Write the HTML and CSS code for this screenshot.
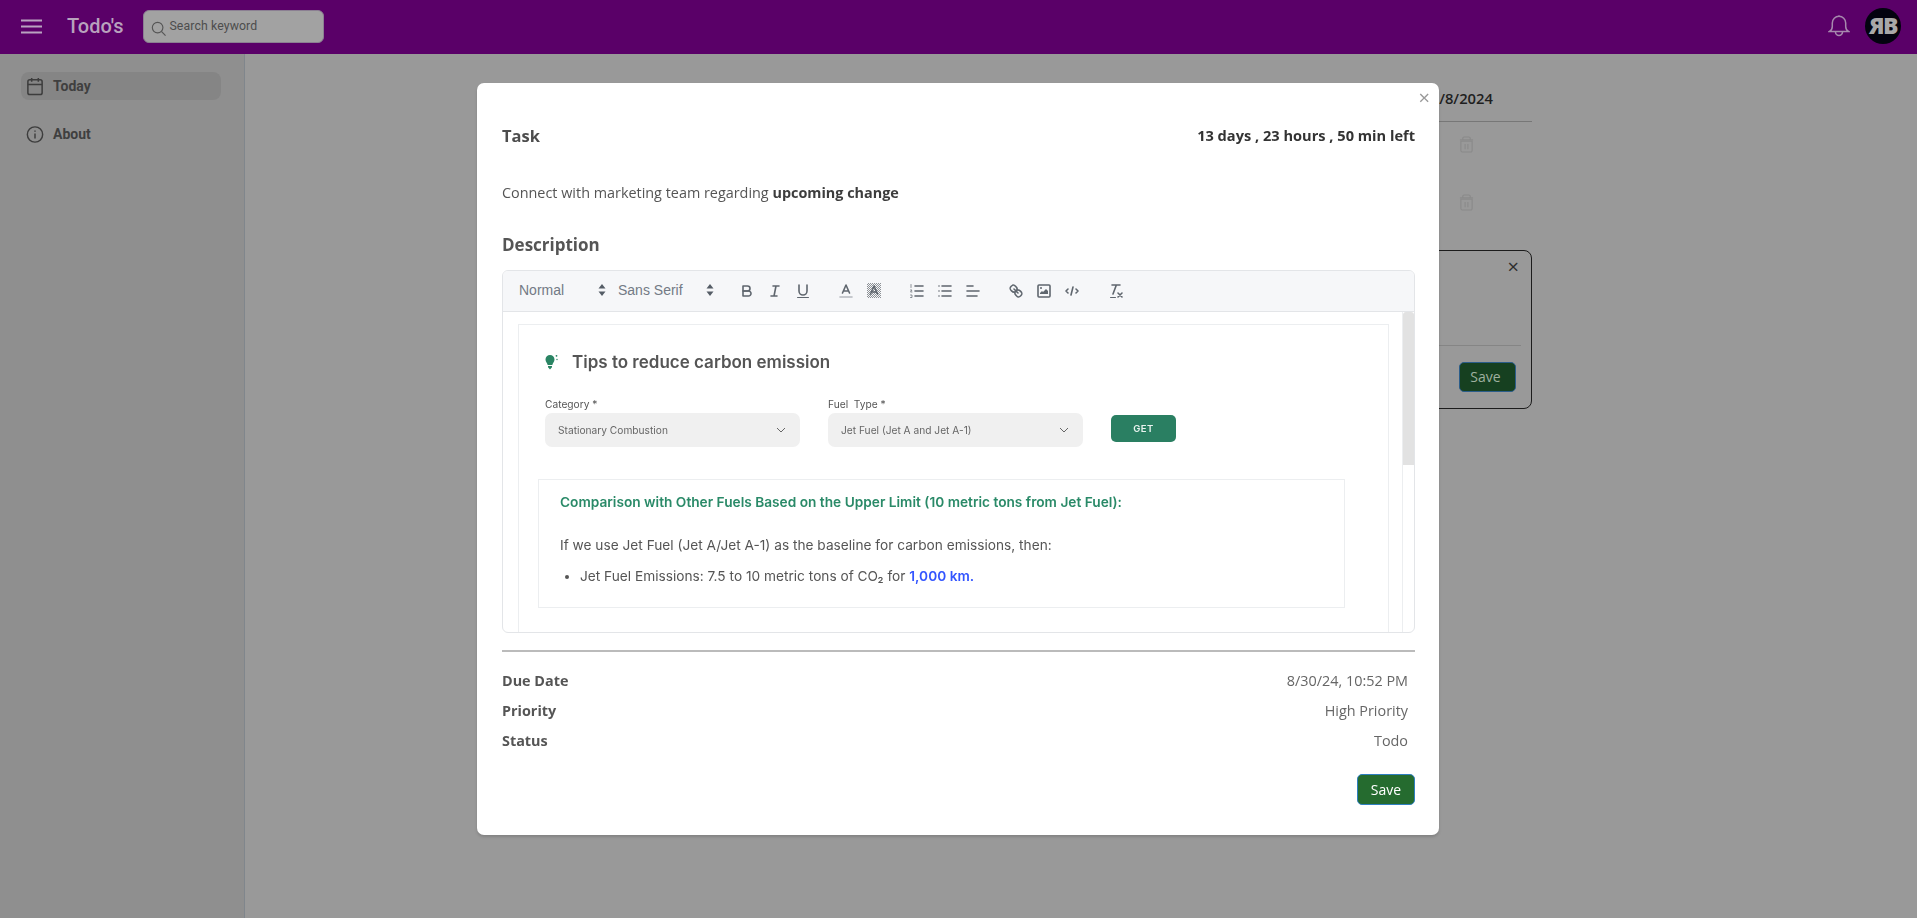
FILE: index.html
```html
<!DOCTYPE html>
<html lang="en">
<head>
<meta charset="utf-8">
<title>Todo's</title>
<link rel="stylesheet" href="styles.css">
</head>
<body>
<div class="app">
  <header class="topbar">
    <svg class="menu-icon" viewBox="0 0 21 15"><path d="M0 1.500h21M0 7.500h21M0 13.500h21"/></svg>
    <div class="brand">Todo's</div>
    <div class="search">
      <svg class="search-icon" viewBox="0 0 17 17"><circle cx="7.500" cy="7.500" r="6"/><path d="M12 12l4.500 4.500"/></svg>
      <span>Search keyword</span>
    </div>
    <div class="topbar-right">
      <svg class="bell" viewBox="0 0 22 22"><path d="M1.500 16.500c1.800-1 2.800-2.500 2.800-5V8a6.700 6.700 0 0 1 13.400 0v3.500c0 2.500 1 4 2.800 5z"/><path d="M7.500 17a3.500 3.500 0 0 0 7 0M11 1.300V.5"/></svg>
      <div class="avatar">ЯB</div>
    </div>
  </header>
  <div class="body">
    <aside class="sidebar">
      <div class="nav-item active">
        <svg class="nav-icon" viewBox="0 0 18 20"><rect x="1.500" y="3" width="15" height="15.500" rx="2"/><path d="M1.500 8h15M5.500 1v4M12.500 1v4"/></svg>
        <span>Today</span>
      </div>
      <div class="nav-item">
        <svg class="nav-icon" viewBox="0 0 20 20"><circle cx="10" cy="10" r="8.500"/><path d="M10 9v5.500M10 5.500v1.500"/></svg>
        <span>About</span>
      </div>
    </aside>
    <main class="main">
      <section class="board">
        <div class="date-head">/8/2024</div>
        <div class="task-row">
          <svg class="trash" viewBox="0 0 16 18"><path d="M2 5.500h12V15.500a1.500 1.500 0 0 1-1.500 1.500h-9A1.500 1.500 0 0 1 2 15.500zM1 4h14M4 4V2.500A1.500 1.500 0 0 1 5.500 1h5A1.500 1.500 0 0 1 12 2.500V4M6.500 8.500v5.500M9.500 8.500v5.500"/></svg>
        </div>
        <div class="task-row">
          <svg class="trash" viewBox="0 0 16 18"><path d="M2 5.500h12V15.500a1.500 1.500 0 0 1-1.500 1.500h-9A1.500 1.500 0 0 1 2 15.500zM1 4h14M4 4V2.500A1.500 1.500 0 0 1 5.500 1h5A1.500 1.500 0 0 1 12 2.500V4M6.500 8.500v5.500M9.500 8.500v5.500"/></svg>
        </div>
        <div class="add-card">
          <div class="add-card-top"><span class="card-close">×</span></div>
          <div class="add-card-foot"><button class="btn-dim">Save</button></div>
        </div>
      </section>
    </main>
  </div>
</div>

<div class="modal">
  <span class="modal-close">×</span>
  <div class="modal-head">
    <h2 class="task-title">Task</h2>
    <div class="time-left">13 days , 23 hours , 50 min left</div>
  </div>
  <p class="task-text">Connect with marketing team regarding <strong>upcoming change</strong></p>
  <h2 class="desc-title">Description</h2>

  <div class="editor">
    <div class="toolbar">
      <div class="picker p-normal">Normal<svg class="updown" viewBox="0 0 8 12"><path d="M4 0l3.500 4.500h-7zM4 12L.5 7.500h7z"/></svg></div>
      <div class="picker p-font">Sans Serif<svg class="updown" viewBox="0 0 8 12"><path d="M4 0l3.500 4.500h-7zM4 12L.5 7.500h7z"/></svg></div>

      <div class="tool-group">
        <svg class="ql" viewBox="0 0 18 18"><path d="M5,4H9.500A2.500,2.500,0,0,1,12,6.500v0A2.500,2.500,0,0,1,9.500,9H5V4Z"/><path d="M5,9h5.500A2.500,2.500,0,0,1,13,11.500v0A2.500,2.500,0,0,1,10.500,14H5V9Z"/></svg>
        <svg class="ql" viewBox="0 0 18 18"><path d="M7 4h6M5 14h6M8 14l2-10"/></svg>
        <svg class="ql" viewBox="0 0 18 18"><path d="M5,3V9a4,4,0,0,0,4,4h0a4,4,0,0,0,4-4V3"/><rect class="fill" x="3" y="15" width="12" height="1" rx=".5"/></svg>
      </div>
      <div class="tool-group">
        <svg class="ql" viewBox="0 0 18 18"><path class="light" d="M3 15h12"/><path d="M5.500 11L9 3l3.500 8M11.630 9H6.380"/></svg>
        <svg class="ql" viewBox="0 0 18 18"><defs><pattern id="hatch" width="2" height="2" patternUnits="userSpaceOnUse"><rect class="hatch-a" width="1" height="1"/><rect class="hatch-a" x="1" y="1" width="1" height="1"/></pattern></defs><rect class="dots" x="2" y="1" width="14" height="15" fill="url(#hatch)"/><path d="M5.500 12L9 4l3.500 8M11.630 10H6.380"/></svg>
      </div>
      <div class="tool-group">
        <svg class="ql" viewBox="0 0 18 18"><path d="M7 4h8M7 9h8M7 14h8"/><path class="thin" d="M3 2.500v3M2.500 8h1.500l-1.500 2h1.500M2.500 13h1.500v2.500h-1.500"/></svg>
        <svg class="ql" viewBox="0 0 18 18"><path d="M6 4h9M6 9h9M6 14h9M3 4h.01M3 9h.01M3 14h.01"/></svg>
        <svg class="ql" viewBox="0 0 18 18"><path d="M3 9h12M3 14h10M3 4h6"/></svg>
      </div>
      <div class="tool-group">
        <svg class="ql" viewBox="0 0 18 18"><path d="M7 7l4 4M8.900,4.577a3.476,3.476,0,0,1,.36,4.679A3.476,3.476,0,0,1,4.577,8.900C3.185,7.500,2.035,6.400,4.217,4.217S7.500,3.185,8.900,4.577ZM13.423,9.100a3.476,3.476,0,0,0-4.679-.36,3.476,3.476,0,0,0,.36,4.679c1.392,1.392,2.500,2.542,4.679.36S14.815,10.500,13.423,9.100Z"/></svg>
        <svg class="ql" viewBox="0 0 18 18"><rect x="3" y="3" width="12" height="12" rx="1"/><circle class="fill" cx="6" cy="6" r="1"/><polygon class="fill" points="5 12 5 11 7 9 8 10 11 7 13 9 13 12"/></svg>
        <svg class="ql" viewBox="0 0 18 18"><path d="M5 7L3 9l2 2M13 7l2 2-2 2M10 5L8 13"/></svg>
      </div>
      <div class="tool-group last">
        <svg class="ql" viewBox="0 0 18 18"><path d="M5 3h8M6 12l3.350-9M11 11l4 4M15 11l-4 4"/><rect class="fill" x="3" y="15" width="6" height="1" rx=".5"/></svg>
      </div>
    </div>

    <div class="editor-body">
      <div class="editor-content">
        <div class="tip-card">
          <div class="tip-title">
            <svg class="bulb" viewBox="0 0 13 16"><path class="bulb-fill" d="M5 1a4.500 4.500 0 0 1 4.500 4.500c0 2.300-1.600 3.200-2.200 5.500H2.700C2.100 8.700.5 7.800.5 5.500A4.500 4.500 0 0 1 5 1zM3 12h4v1.300L5 15.500l-2-2.200z"/><circle class="bulb-fill" cx="11.500" cy="1.800" r=".9"/><circle class="bulb-fill" cx="12" cy="5.500" r=".7"/></svg>
            <span>Tips to reduce carbon emission</span>
          </div>
          <div class="form-row">
            <div class="field">
              <label>Category *</label>
              <div class="select"><span>Stationary Combustion</span><svg class="chev" viewBox="0 0 10 6"><path d="M1 1l4 4 4-4"/></svg></div>
            </div>
            <div class="field">
              <label>Fuel&nbsp; Type *</label>
              <div class="select"><span>Jet Fuel (Jet A and Jet A-1)</span><svg class="chev" viewBox="0 0 10 6"><path d="M1 1l4 4 4-4"/></svg></div>
            </div>
            <button class="btn-get">GET</button>
          </div>
          <div class="result">
            <h3>Comparison with Other Fuels Based on the Upper Limit (10 metric tons from Jet Fuel):</h3>
            <p>If we use Jet Fuel (Jet A/Jet A-1) as the baseline for carbon emissions, then:</p>
            <ul>
              <li>Jet Fuel Emissions: 7.5 to 10 metric tons of CO₂ for <b>1,000 km.</b></li>
            </ul>
          </div>
        </div>
      </div>
      <div class="scrolltrack"><div class="scrollthumb"></div></div>
    </div>
  </div>

  <hr class="rule">
  <dl class="facts">
    <div class="fact"><dt>Due Date</dt><dd>8/30/24, 10:52 PM</dd></div>
    <div class="fact"><dt>Priority</dt><dd>High Priority</dd></div>
    <div class="fact"><dt>Status</dt><dd>Todo</dd></div>
  </dl>
  <div class="modal-foot"><button class="btn-save">Save</button></div>
</div>
</body>
</html>
```
FILE: styles.css
```css
* { box-sizing: border-box; }
html, body { margin: 0; height: 100%; overflow: hidden; }
body { font-family: "Open Sans", sans-serif; background: #999; color: #333; }
.app { height: 918px; display: flex; flex-direction: column; }

.topbar { height: 54px; flex: none; background: #5a0068; display: flex; align-items: center; padding: 0 16px 2px 21px; }
.menu-icon { width: 21px; height: 15px; flex: none; fill: none; stroke: #b9a3c0; stroke-width: 2; }
.brand { margin-left: 25px; font: 500 20px/1 Roboto, sans-serif; color: #b8a2bd; }
.search { margin-left: 20px; width: 181px; height: 33px; background: #a2a2a2; border: 1px solid #8b7f92; border-radius: 6px; display: flex; align-items: center; padding: 1px 0 0 7px; font: 400 12.300px/1 Roboto, sans-serif; color: #4d4d4d; }
.search span { margin-left: 3px; letter-spacing: .1px; }
.search-icon { width: 15px; height: 15px; margin-top: 3px; fill: none; stroke: #555; stroke-width: 1.300; }
.topbar-right { margin-left: auto; display: flex; align-items: center; gap: 15px; }
.bell { width: 22px; height: 22px; fill: none; stroke: #a688ad; stroke-width: 1.500; }
.avatar { width: 36px; height: 36px; border-radius: 50%; background: #03030f; color: #a8a8a8; font: 800 23px/35px "Open Sans", sans-serif; text-align: center; letter-spacing: -1.500px; }

.body { flex: 1; display: flex; min-height: 0; }
.sidebar { width: 245px; flex: none; background: #8f8f8f; border-right: 1px solid #80868c; padding: 18px 23px 0 21px; }
.nav-item { height: 28px; margin-bottom: 20px; border-radius: 8px; display: flex; align-items: center; padding-left: 5px; gap: 9px; font: 700 14px/1 Roboto, sans-serif; color: #3f3f3f; }
.nav-item.active { background: #858585; }
.nav-icon { width: 18px; height: 19px; flex: none; fill: none; stroke: #3d3d3d; stroke-width: 1.600; }

.main { flex: 1; min-width: 0; padding-top: 29px; }
.board { width: 900px; margin-left: 387px; }
.date-head { height: 39px; border-bottom: 1px solid #777; text-align: right; padding-right: 39px; font-size: 14.800px; line-height: 30px; font-weight: 600; color: #1f1f1f; }
.task-row { height: 58px; display: flex; justify-content: flex-end; padding: 14px 58px 0 0; }
.trash { width: 15px; height: 17px; fill: none; stroke: #8a8a8a; stroke-width: 1.200; }
.add-card { height: 159px; margin-top: 12px; border: 1px solid #1c1c1c; border-radius: 8px; display: flex; flex-direction: column; padding: 0 10px 0 0; }
.add-card-top { height: 95px; border-bottom: 1px solid #858585; display: flex; justify-content: flex-end; }
.card-close { margin: 3px 2px 0 0; font-size: 20px; line-height: 26px; color: #2d2d2d; }
.add-card-foot { flex: 1; display: flex; justify-content: flex-end; padding: 16px 5px 0 0; }
.btn-dim { width: 57px; height: 30px; background: #164020; border: 1px solid #2b5d8a; border-radius: 5px; color: #9fb09f; font: 400 14px/1 "Open Sans", sans-serif; padding: 0 4px 0 0; }

.modal { position: fixed; left: 477px; top: 83px; width: 962px; height: 752px; background: #fff; border-radius: 7px; box-shadow: 0 2px 3px rgba(0,0,0,.15); padding: 40px 24px 0 25px; color: #555; }
.modal-close { position: absolute; right: 9px; top: 2px; font-size: 20px; line-height: 26px; color: #999; }
.modal-head { display: flex; align-items: center; justify-content: space-between; height: 24px; }
.task-title { margin: 0; font-size: 16.500px; font-weight: 700; color: #4d4d4d; }
.time-left { font-size: 14.600px; font-weight: 700; color: #333; }
.task-text { margin: 0; padding-top: 36px; font-size: 14.400px; line-height: 20px; color: #555; }
.task-text strong { font-weight: 700; color: #3d3d3d; }
.desc-title { margin: 30px 0 0; font-size: 17px; line-height: 24px; font-weight: 700; color: #555; }

.editor { margin-top: 13px; height: 363px; border: 1px solid #e3e5e8; border-radius: 6px; display: flex; flex-direction: column; overflow: hidden; }
.toolbar { height: 41px; flex: none; background: #f6f7f9; border-bottom: 1px solid #e3e5e8; display: flex; align-items: center; padding-left: 16px; font: 400 14px/1 "Liberation Sans", sans-serif; color: #737a85; }
.picker { display: flex; align-items: center; justify-content: space-between; padding-bottom: 2px; }
.p-normal { width: 87px; }
.p-font { width: 96px; margin-left: 12px; }
.updown { width: 8px; height: 12px; fill: #555d66; }
.tool-group { display: flex; gap: 10px; margin-left: 25px; }
.picker + .tool-group { margin-left: 24px; }
.tool-group.last { margin-left: 26px; }
.ql { width: 18px; height: 18px; fill: none; stroke: #5f666e; stroke-width: 1.600; stroke-linecap: round; stroke-linejoin: round; }
.ql .fill { fill: #5f666e; stroke: none; }
.ql .light { stroke: #b5b9be; }
.ql .thin { stroke-width: .7; }
.ql .dots { stroke: none; }
.ql .hatch-a { fill: #8d9196; stroke: none; }

.editor-body { flex: 1; display: flex; min-height: 0; }
.editor-content { flex: 1; min-width: 0; overflow: hidden; padding: 12px 0 0 15px; }
.tip-card { width: 871px; height: 340px; border: 1px solid #eceef0; padding: 0 19px; font-family: Inter, sans-serif; }
.tip-title { display: flex; align-items: center; height: 18px; margin-top: 28px; padding-left: 7px; gap: 14px; font-size: 17px; font-weight: 600; color: #555; }
.bulb { width: 13px; height: 16px; flex: none; }
.bulb-fill { fill: #2a8463; }
.form-row { display: flex; margin-top: 27px; padding-left: 7px; align-items: flex-start; }
.field { width: 255px; margin-right: 28px; }
.field label { display: block; font-size: 10.200px; line-height: 12px; color: #555; }
.select { height: 34px; margin-top: 3px; background: #f0f0f0; border-radius: 7px; display: flex; align-items: center; justify-content: space-between; padding: 0 14px 0 13px; font-size: 10.200px; color: #666; }
.chev { width: 10px; height: 6px; fill: none; stroke: #666; stroke-width: 1; }
.btn-get { width: 65px; height: 27px; margin: 17px 0 0 0; border: 0; border-radius: 5px; background: #2a7f62; color: #e9f3ef; font: 600 9.500px/1 Inter, sans-serif; letter-spacing: .5px; }
.result { width: 807px; height: 129px; margin-top: 32px; border: 1px solid #eceef0; padding: 0 21px; }
.result h3 { margin: 14px 0 0; font-size: 13.700px; line-height: 16px; font-weight: 600; color: #2a8a68; }
.result p { margin: 27px 0 0; font-size: 13.700px; line-height: 16px; color: #555; }
.result ul { margin: 15px 0 0; padding-left: 20px; font-size: 13.700px; line-height: 16px; color: #555; }
.result b { font-weight: 600; color: #3355ff; }
.scrolltrack { width: 12px; flex: none; border-left: 1px solid #eceef0; }
.scrollthumb { width: 100%; height: 153px; background: #e2e2e2; border-radius: 3px 3px 0 0; }

.rule { margin: 17px 0 0; border: 0; border-top: 2px solid #bbb; }
.facts { margin: 18px 0 0; padding: 0; }
.fact { display: flex; justify-content: space-between; height: 30px; line-height: 22px; font-size: 14.400px; padding-right: 7px; }
.fact dt { font-weight: 700; color: #555; }
.fact dd { margin: 0; color: #666; }
.modal-foot { display: flex; justify-content: flex-end; margin-top: 14px; }
.btn-save { width: 58px; height: 31px; background: #256b2f; border: 1px solid #2f7fc0; border-radius: 5px; color: #fff; font: 400 14px/1 "Open Sans", sans-serif; padding: 0; }
```
